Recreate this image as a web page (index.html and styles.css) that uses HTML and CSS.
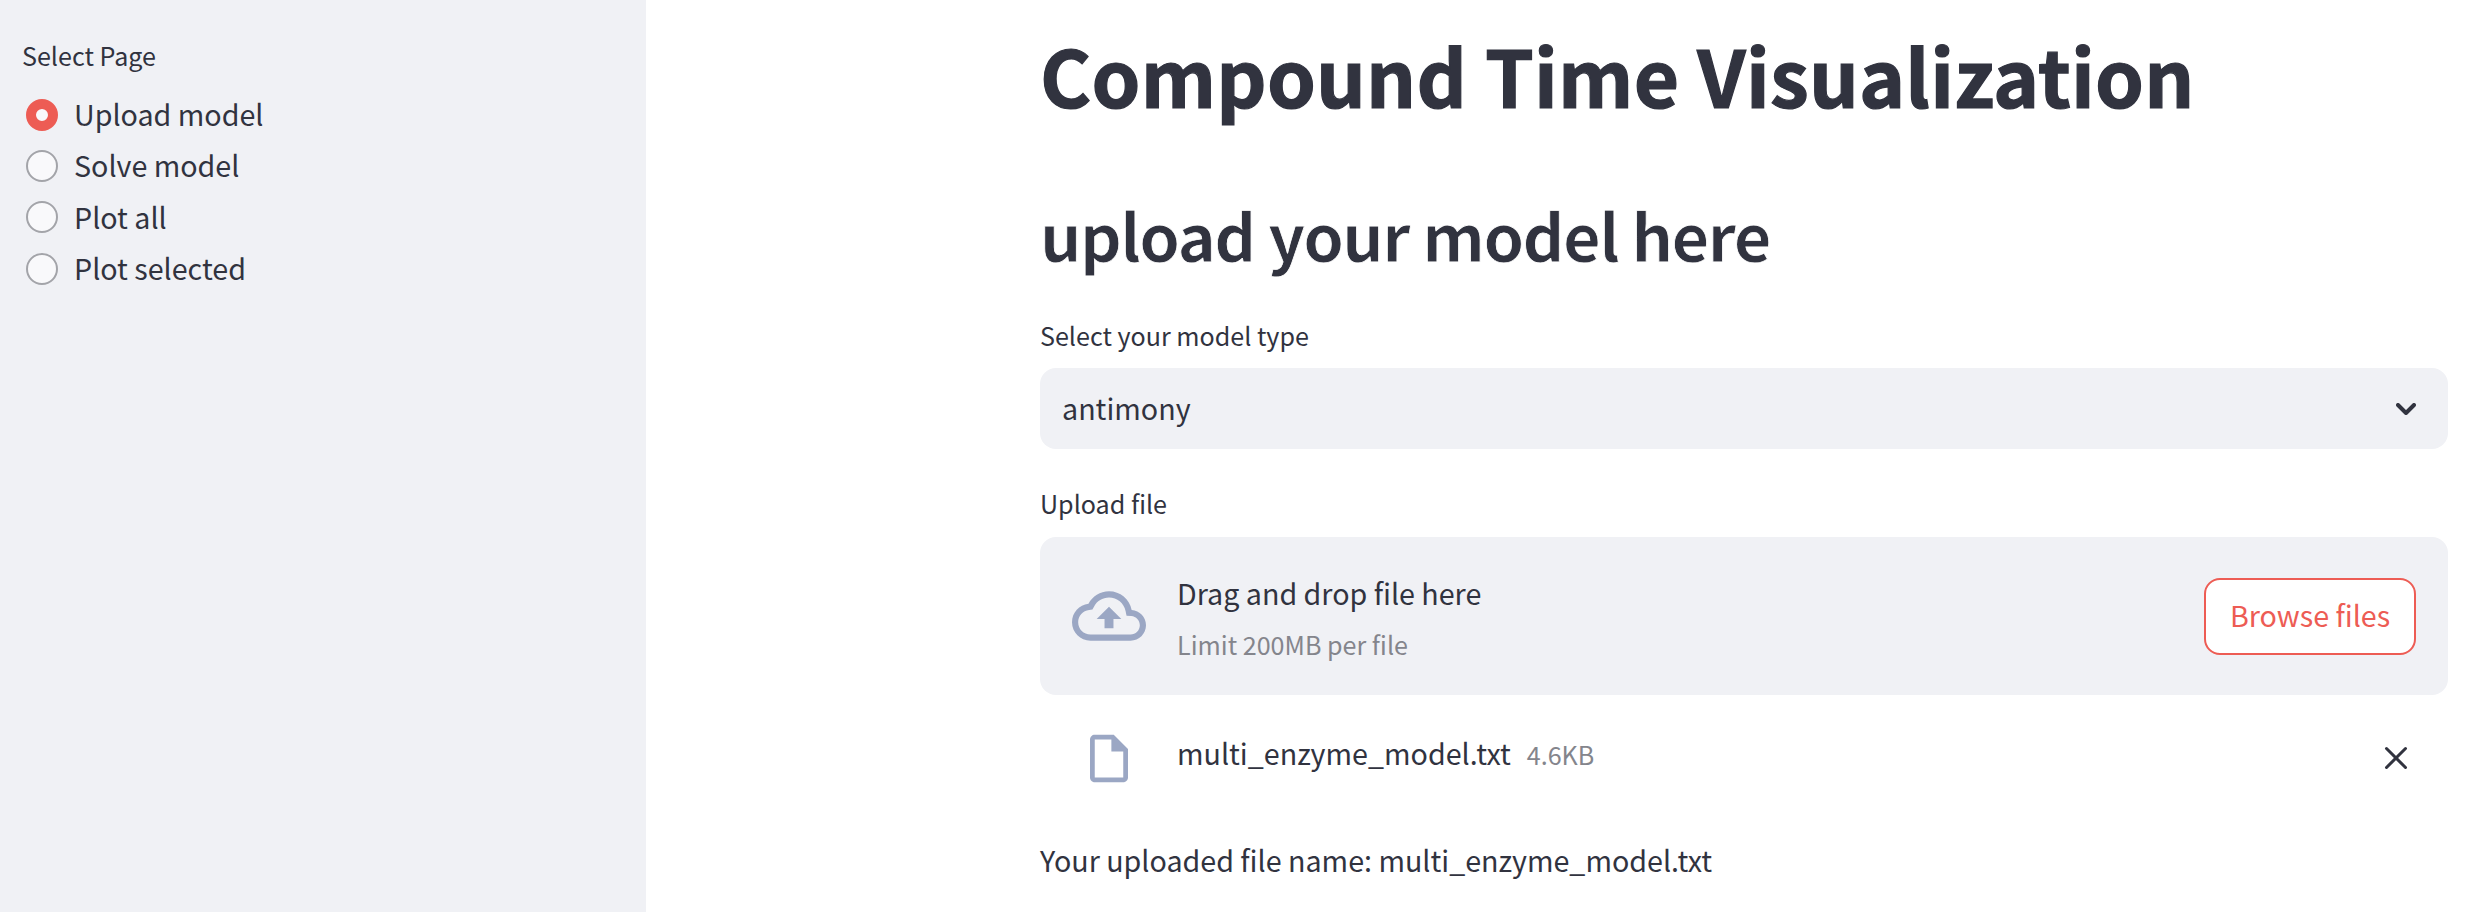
FILE: index.html
```html
<!DOCTYPE html>
<html lang="en">
<head>
<meta charset="utf-8">
<title>Compound Time Visualization</title>
<link rel="stylesheet" href="styles.css">
</head>
<body>
<div class="app">
  <aside class="sidebar">
    <div class="label">Select Page</div>
    <div class="radio-group" role="radiogroup">
      <div class="radio"><span class="dot checked"></span><span>Upload model</span></div>
      <div class="radio"><span class="dot"></span><span>Solve model</span></div>
      <div class="radio"><span class="dot"></span><span>Plot all</span></div>
      <div class="radio"><span class="dot"></span><span>Plot selected</span></div>
    </div>
  </aside>
  <main class="main">
    <h1 class="title">Compound Time Visualization</h1>
    <h2 class="subtitle">upload your model here</h2>
    <div class="label">Select your model type</div>
    <div class="select">
      <span>antimony</span>
      <svg class="chevron" viewBox="0 0 20 12"><path d="M2 2l8 8 8-8"/></svg>
    </div>
    <div class="label upload-label">Upload file</div>
    <section class="dropzone">
      <svg class="cloud" viewBox="0 0 24 24"><path d="M19.35 10.04C18.67 6.59 15.64 4 12 4 9.11 4 6.6 5.64 5.35 8.04 2.34 8.36 0 10.91 0 14c0 3.31 2.69 6 6 6h13c2.76 0 5-2.24 5-5 0-2.64-2.05-4.78-4.65-4.96zM19 18H6c-2.21 0-4-1.79-4-4 0-2.05 1.53-3.76 3.56-3.97l1.07-.11.5-.95C8.08 7.14 9.94 6 12 6c2.62 0 4.88 1.86 5.39 4.43l.3 1.5 1.53.11c1.56.1 2.78 1.41 2.78 2.96 0 1.65-1.35 3-3 3zM8 13h2.55v3h2.9v-3H16l-4-4z"/></svg>
      <div class="drop-text">
        <span class="drop-title">Drag and drop file here</span>
        <span class="drop-limit">Limit 200MB per file</span>
      </div>
      <button class="browse">Browse files</button>
    </section>
    <div class="file-row">
      <svg class="file-icon" viewBox="4 2 16 20"><path d="M14 2H6c-1.1 0-1.99.9-1.99 2L4 20c0 1.1.89 2 1.99 2H18c1.1 0 2-.9 2-2V8l-6-6zM6 20V4h7v5h5v11H6z"/></svg>
      <span class="file-name">multi_enzyme_model.txt</span>
      <span class="file-size">4.6KB</span>
      <svg class="close" viewBox="0 0 24 24"><path d="M2.5 2.5l19 19M21.5 2.5l-19 19"/></svg>
    </div>
    <p class="result">Your uploaded file name: multi_enzyme_model.txt</p>
  </main>
</div>
</body>
</html>
```
FILE: styles.css
```css
* { box-sizing: border-box; }
body {
  margin: 0;
  background: #fff;
  color: #31333f;
  font-family: "Noto Sans CJK SC", "Noto Sans", sans-serif;
  font-size: 28.67px;
  overflow: hidden;
}
.app { display: flex; width: 2484px; height: 912px; white-space: nowrap; }
.sidebar { width: 646px; flex: none; background: #f0f1f5; padding: 35px 0 0 22px; }
.label { font-size: 25.1px; line-height: 40px; height: 40px; }
.radio-group { margin-top: 13px; }
.radio { display: flex; align-items: center; gap: 16px; height: 51.4px; padding-left: 4px; line-height: 51.4px; }
.dot { width: 32px; height: 32px; border-radius: 50%; border: 2px solid #a3a4a9; background: #f9f9fb; margin-top: 2px; }
.dot.checked { border: 10px solid #ed5c54; background: #f9f9fb; }
.main { flex: 1; padding: 24px 36px 0 394px; display: flex; flex-direction: column; }
.title { margin: 0; font-size: 78.2px; line-height: 100px; font-weight: 700; letter-spacing: 0.23px; -webkit-text-stroke: 1.2px #31333f; }
.subtitle { margin: 67px 0 38px; font-size: 65px; line-height: 86px; font-weight: 600; letter-spacing: -1.52px; -webkit-text-stroke: 0.8px #fff; }
.select {
  display: flex; align-items: center; justify-content: space-between;
  height: 81px; margin-top: 13px; padding: 0 32px 3px 22px;
  border-radius: 16px; background: #f0f1f5;
}
.chevron { width: 20px; height: 12px; margin-top: 3px; fill: none; stroke: #31333f; stroke-width: 4; stroke-linecap: round; stroke-linejoin: round; }
.upload-label { margin-top: 34px; }
.dropzone {
  display: flex; align-items: center; height: 158px; margin-top: 14px; padding: 0 32px;
  border-radius: 16px; background: #f0f1f5;
}
.cloud { width: 74px; height: 74px; fill: #9ba7c4; }
.drop-text { display: flex; flex-direction: column; gap: 6px; margin-left: 31px; flex: 1; }
.drop-title { line-height: 50px; }
.drop-limit { font-size: 25.1px; line-height: 40px; color: #84858c; }
.browse {
  width: 212px; height: 77px; padding: 0 0 3px; border: 2px solid #ed5c54; border-radius: 16px;
  background: #fff; color: #ed5c54; font: inherit;
}
.file-row { display: flex; align-items: center; height: 50px; margin-top: 32px; padding: 0 40px 0 50px; }
.file-icon { width: 38px; height: 49px; margin-top: 12px; fill: #9ba7c4; }
.file-name { margin-left: 49px; }
.file-size { margin-left: 16px; padding-top: 3px; font-size: 25.1px; color: #84858c; flex: 1; }
.close { width: 24px; height: 24px; margin-top: 11px; fill: none; stroke: #31333f; stroke-width: 3; stroke-linecap: round; }
.result { margin: 58px 0 0; line-height: 50px; }
```
